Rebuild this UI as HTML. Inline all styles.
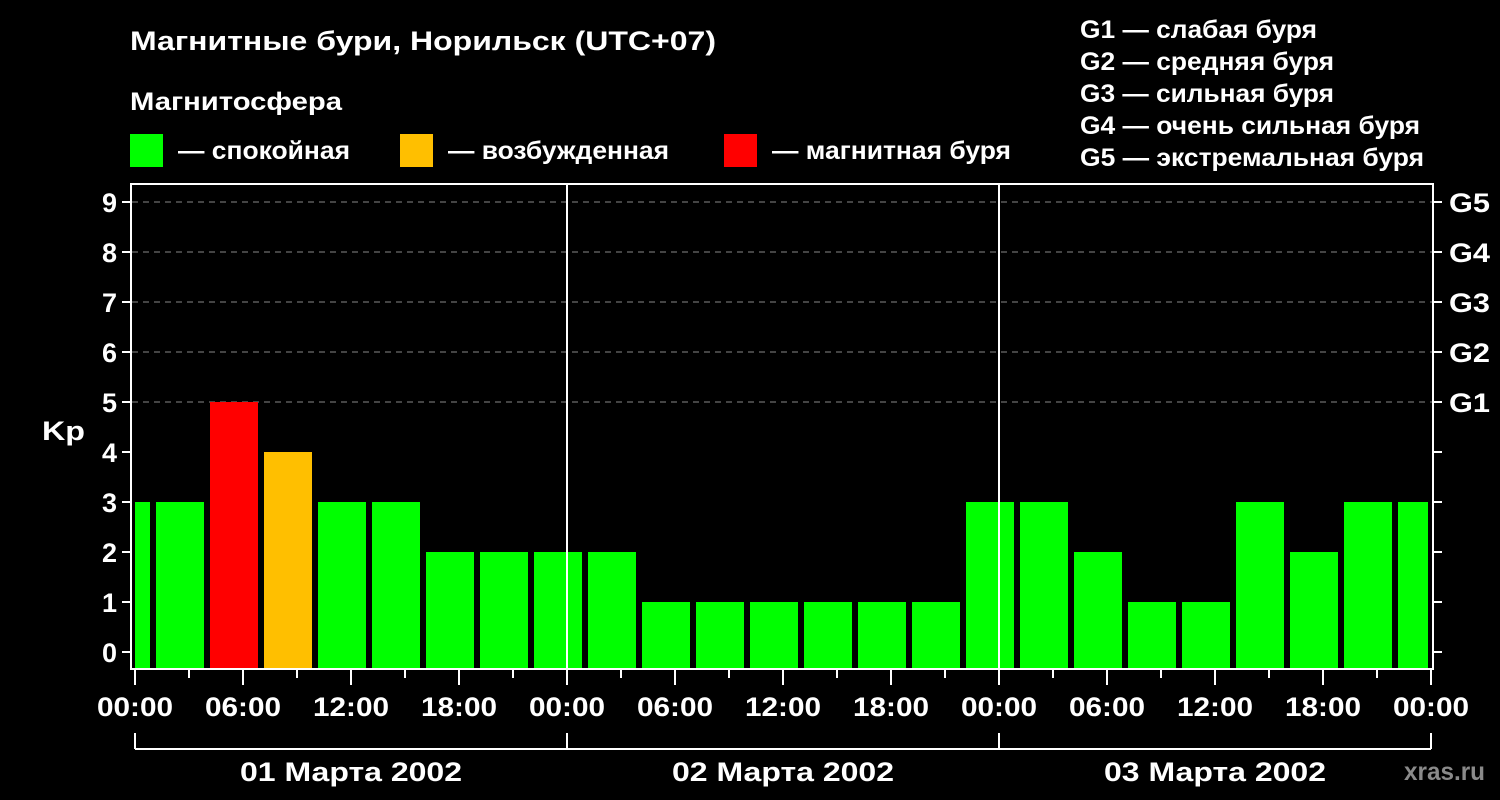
<!DOCTYPE html>
<html><head><meta charset="utf-8"><style>
html,body{margin:0;padding:0;background:#000;width:1500px;height:800px;overflow:hidden}
svg{display:block}
text{font-family:"Liberation Sans",Arial,sans-serif;font-weight:bold;fill:#fff}
</style></head><body>
<svg width="1500" height="800" viewBox="0 0 1500 800" xmlns="http://www.w3.org/2000/svg">
<text x="130" y="50" font-size="27" textLength="586" lengthAdjust="spacingAndGlyphs">Магнитные бури, Норильск (UTC+07)</text>
<text x="130" y="110" font-size="25" textLength="212" lengthAdjust="spacingAndGlyphs">Магнитосфера</text>
<rect x="130" y="134" width="33" height="33" fill="#00ff00"/>
<text x="178" y="159" font-size="25" textLength="172" lengthAdjust="spacingAndGlyphs">— спокойная</text>
<rect x="400" y="134" width="33" height="33" fill="#ffbf00"/>
<text x="448" y="159" font-size="25" textLength="221" lengthAdjust="spacingAndGlyphs">— возбужденная</text>
<rect x="724" y="134" width="33" height="33" fill="#ff0000"/>
<text x="772" y="159" font-size="25" textLength="239" lengthAdjust="spacingAndGlyphs">— магнитная буря</text>
<g font-size="25">
<text x="1080" y="38" textLength="237" lengthAdjust="spacingAndGlyphs">G1 — слабая буря</text>
<text x="1080" y="70" textLength="254" lengthAdjust="spacingAndGlyphs">G2 — средняя буря</text>
<text x="1080" y="102" textLength="254" lengthAdjust="spacingAndGlyphs">G3 — сильная буря</text>
<text x="1080" y="134" textLength="340" lengthAdjust="spacingAndGlyphs">G4 — очень сильная буря</text>
<text x="1080" y="166" textLength="344" lengthAdjust="spacingAndGlyphs">G5 — экстремальная буря</text>
</g>
<g stroke="#888" stroke-width="1" stroke-dasharray="6,5">
<line x1="132" y1="202" x2="1433" y2="202"/>
<line x1="132" y1="252" x2="1433" y2="252"/>
<line x1="132" y1="302" x2="1433" y2="302"/>
<line x1="132" y1="352" x2="1433" y2="352"/>
<line x1="132" y1="402" x2="1433" y2="402"/>
</g>
<g>
<rect x="135" y="502" width="15" height="166" fill="#00ff00"/>
<rect x="156" y="502" width="48" height="166" fill="#00ff00"/>
<rect x="210" y="402" width="48" height="266" fill="#ff0000"/>
<rect x="264" y="452" width="48" height="216" fill="#ffbf00"/>
<rect x="318" y="502" width="48" height="166" fill="#00ff00"/>
<rect x="372" y="502" width="48" height="166" fill="#00ff00"/>
<rect x="426" y="552" width="48" height="116" fill="#00ff00"/>
<rect x="480" y="552" width="48" height="116" fill="#00ff00"/>
<rect x="534" y="552" width="48" height="116" fill="#00ff00"/>
<rect x="588" y="552" width="48" height="116" fill="#00ff00"/>
<rect x="642" y="602" width="48" height="66" fill="#00ff00"/>
<rect x="696" y="602" width="48" height="66" fill="#00ff00"/>
<rect x="750" y="602" width="48" height="66" fill="#00ff00"/>
<rect x="804" y="602" width="48" height="66" fill="#00ff00"/>
<rect x="858" y="602" width="48" height="66" fill="#00ff00"/>
<rect x="912" y="602" width="48" height="66" fill="#00ff00"/>
<rect x="966" y="502" width="48" height="166" fill="#00ff00"/>
<rect x="1020" y="502" width="48" height="166" fill="#00ff00"/>
<rect x="1074" y="552" width="48" height="116" fill="#00ff00"/>
<rect x="1128" y="602" width="48" height="66" fill="#00ff00"/>
<rect x="1182" y="602" width="48" height="66" fill="#00ff00"/>
<rect x="1236" y="502" width="48" height="166" fill="#00ff00"/>
<rect x="1290" y="552" width="48" height="116" fill="#00ff00"/>
<rect x="1344" y="502" width="48" height="166" fill="#00ff00"/>
<rect x="1398" y="502" width="30" height="166" fill="#00ff00"/>
</g>
<line x1="567" y1="183" x2="567" y2="668" stroke="#fff" stroke-width="2"/>
<line x1="999" y1="183" x2="999" y2="668" stroke="#fff" stroke-width="2"/>
<rect x="131" y="184" width="1302" height="485" fill="none" stroke="#fff" stroke-width="2"/>
<g stroke="#fff" stroke-width="2">
<line x1="122" y1="202" x2="131" y2="202"/><line x1="122" y1="252" x2="131" y2="252"/>
<line x1="122" y1="302" x2="131" y2="302"/><line x1="122" y1="352" x2="131" y2="352"/>
<line x1="122" y1="402" x2="131" y2="402"/><line x1="122" y1="452" x2="131" y2="452"/>
<line x1="122" y1="502" x2="131" y2="502"/><line x1="122" y1="552" x2="131" y2="552"/>
<line x1="122" y1="602" x2="131" y2="602"/><line x1="122" y1="652" x2="131" y2="652"/>
<line x1="1433" y1="202" x2="1442" y2="202"/><line x1="1433" y1="252" x2="1442" y2="252"/>
<line x1="1433" y1="302" x2="1442" y2="302"/><line x1="1433" y1="352" x2="1442" y2="352"/>
<line x1="1433" y1="402" x2="1442" y2="402"/><line x1="1433" y1="452" x2="1442" y2="452"/>
<line x1="1433" y1="502" x2="1442" y2="502"/><line x1="1433" y1="552" x2="1442" y2="552"/>
<line x1="1433" y1="602" x2="1442" y2="602"/><line x1="1433" y1="652" x2="1442" y2="652"/>
</g>
<g font-size="27" text-anchor="end">
<text x="117" y="212">9</text><text x="117" y="262">8</text><text x="117" y="312">7</text>
<text x="117" y="362">6</text><text x="117" y="412">5</text><text x="117" y="462">4</text>
<text x="117" y="512">3</text><text x="117" y="562">2</text><text x="117" y="612">1</text>
<text x="117" y="662">0</text>
</g>
<text x="42" y="440" font-size="27" textLength="43" lengthAdjust="spacingAndGlyphs">Kp</text>
<g font-size="27">
<text x="1449" y="212" textLength="41" lengthAdjust="spacingAndGlyphs">G5</text><text x="1449" y="262" textLength="41" lengthAdjust="spacingAndGlyphs">G4</text><text x="1449" y="312" textLength="41" lengthAdjust="spacingAndGlyphs">G3</text>
<text x="1449" y="362" textLength="41" lengthAdjust="spacingAndGlyphs">G2</text><text x="1449" y="412" textLength="41" lengthAdjust="spacingAndGlyphs">G1</text>
</g>
<g stroke="#fff" stroke-width="2">
<line x1="135" y1="669" x2="135" y2="685"/><line x1="189" y1="669" x2="189" y2="678"/>
<line x1="243" y1="669" x2="243" y2="685"/><line x1="297" y1="669" x2="297" y2="678"/>
<line x1="351" y1="669" x2="351" y2="685"/><line x1="405" y1="669" x2="405" y2="678"/>
<line x1="459" y1="669" x2="459" y2="685"/><line x1="513" y1="669" x2="513" y2="678"/>
<line x1="567" y1="669" x2="567" y2="685"/><line x1="621" y1="669" x2="621" y2="678"/>
<line x1="675" y1="669" x2="675" y2="685"/><line x1="729" y1="669" x2="729" y2="678"/>
<line x1="783" y1="669" x2="783" y2="685"/><line x1="837" y1="669" x2="837" y2="678"/>
<line x1="891" y1="669" x2="891" y2="685"/><line x1="945" y1="669" x2="945" y2="678"/>
<line x1="999" y1="669" x2="999" y2="685"/><line x1="1053" y1="669" x2="1053" y2="678"/>
<line x1="1107" y1="669" x2="1107" y2="685"/><line x1="1161" y1="669" x2="1161" y2="678"/>
<line x1="1215" y1="669" x2="1215" y2="685"/><line x1="1269" y1="669" x2="1269" y2="678"/>
<line x1="1323" y1="669" x2="1323" y2="685"/><line x1="1377" y1="669" x2="1377" y2="678"/>
<line x1="1431" y1="669" x2="1431" y2="685"/>
<line x1="135" y1="749" x2="1431" y2="749"/>
<line x1="135" y1="733" x2="135" y2="749"/><line x1="567" y1="733" x2="567" y2="749"/>
<line x1="999" y1="733" x2="999" y2="749"/><line x1="1431" y1="733" x2="1431" y2="749"/>
</g>
<g font-size="27" text-anchor="middle">
<text x="135" y="716" textLength="76" lengthAdjust="spacingAndGlyphs">00:00</text><text x="243" y="716" textLength="76" lengthAdjust="spacingAndGlyphs">06:00</text><text x="351" y="716" textLength="76" lengthAdjust="spacingAndGlyphs">12:00</text>
<text x="459" y="716" textLength="76" lengthAdjust="spacingAndGlyphs">18:00</text><text x="567" y="716" textLength="76" lengthAdjust="spacingAndGlyphs">00:00</text><text x="675" y="716" textLength="76" lengthAdjust="spacingAndGlyphs">06:00</text>
<text x="783" y="716" textLength="76" lengthAdjust="spacingAndGlyphs">12:00</text><text x="891" y="716" textLength="76" lengthAdjust="spacingAndGlyphs">18:00</text><text x="999" y="716" textLength="76" lengthAdjust="spacingAndGlyphs">00:00</text>
<text x="1107" y="716" textLength="76" lengthAdjust="spacingAndGlyphs">06:00</text><text x="1215" y="716" textLength="76" lengthAdjust="spacingAndGlyphs">12:00</text><text x="1323" y="716" textLength="76" lengthAdjust="spacingAndGlyphs">18:00</text>
<text x="1431" y="716" textLength="76" lengthAdjust="spacingAndGlyphs">00:00</text>
<text x="351" y="781" textLength="222" lengthAdjust="spacingAndGlyphs">01 Марта 2002</text>
<text x="783" y="781" textLength="222" lengthAdjust="spacingAndGlyphs">02 Марта 2002</text>
<text x="1215" y="781" textLength="222" lengthAdjust="spacingAndGlyphs">03 Марта 2002</text>
</g>
<text x="1404" y="780" font-size="25" textLength="81" lengthAdjust="spacingAndGlyphs" style="fill:#8a8a8a">xras.ru</text>
</svg>
</body></html>
